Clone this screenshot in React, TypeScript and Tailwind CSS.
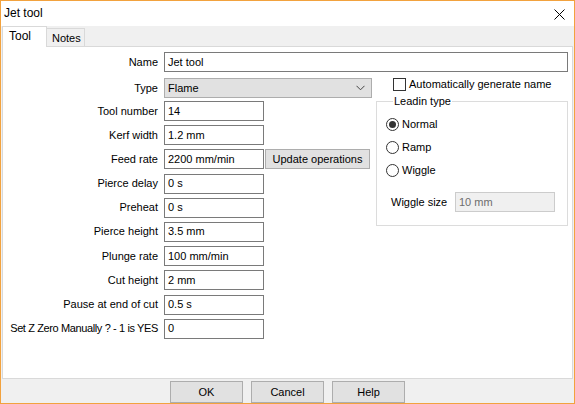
import React from "react";

const fields: [string, string][] = [
  ["Tool number", "14"],
  ["Kerf width", "1.2 mm"],
  ["Feed rate", "2200 mm/min"],
  ["Pierce delay", "0 s"],
  ["Preheat", "0 s"],
  ["Pierce height", "3.5 mm"],
  ["Plunge rate", "100 mm/min"],
  ["Cut height", "2 mm"],
  ["Pause at end of cut", "0.5 s"],
  ["Set Z Zero Manually ? - 1 is YES", "0"],
];

function Label({ children, tight }: { children: React.ReactNode; tight?: boolean }) {
  return (
    <div className="flex w-[150px] shrink-0 justify-end whitespace-nowrap">
      <span className={tight ? "tracking-[-0.38px]" : ""}>{children}</span>
    </div>
  );
}

function TextBox({ value, className = "" }: { value: string; className?: string }) {
  return (
    <div
      className={`flex h-[20px] items-center border border-[#7a7a7a] bg-white pl-[3px] text-black ${className}`}
    >
      {value}
    </div>
  );
}

function Radio({ label, checked }: { label: string; checked?: boolean }) {
  return (
    <div className="flex h-[13px] items-center gap-[3px]">
      <span className="flex h-[13px] w-[13px] items-center justify-center rounded-full border border-[#333] bg-white">
        {checked && <span className="h-[7px] w-[7px] rounded-full bg-[#333]" />}
      </span>
      <span>{label}</span>
    </div>
  );
}

function Button({ children, className = "" }: { children: React.ReactNode; className?: string }) {
  return (
    <div
      className={`flex items-center justify-center border border-[#adadad] bg-[#e1e1e1] text-black ${className}`}
    >
      {children}
    </div>
  );
}

export default function App() {
  return (
    <div className="flex h-[404px] w-[575px] flex-col border border-[#f2a23e] bg-[#f0f0f0] font-['Liberation_Sans',Arial,sans-serif] text-[11px] leading-[13px] text-black">
      {/* title bar */}
      <div className="flex h-[25px] shrink-0 items-center justify-between bg-white pl-[3px] pr-[9px]">
        <span className="text-[12px]">Jet tool</span>
        <svg width="11" height="11" viewBox="0 0 11 11" className="mt-[2px]">
          <path d="M0.5 0.5 L10.5 10.5 M10.5 0.5 L0.5 10.5" stroke="#000" strokeWidth="1" />
        </svg>
      </div>

      {/* tabs */}
      <div className="flex h-[20px] shrink-0 items-end pl-[1px]">
        <div className="relative z-10 -mb-px flex h-[21px] w-[45px] items-start border border-b-0 border-[#d9d9d9] bg-white pl-[6px] pt-[3px] text-[12px]">
          Tool
        </div>
        <div className="-ml-px flex h-[18px] w-[39px] items-start border border-b-0 border-[#d9d9d9] pl-[5px] pt-[3px]">
          Notes
        </div>
      </div>

      {/* tab page */}
      <div className="mx-[1px] flex-1 border border-[#d9d9d9] bg-white pl-[5px] pr-[4px] pt-[5px]">
        <div className="flex items-center gap-[6px]">
          <Label>Name</Label>
          <TextBox value="Jet tool" className="flex-1" />
        </div>

        <div className="mt-[6px] flex items-center">
          <Label>Type</Label>
          <div className="ml-[6px] flex h-[20px] w-[208px] items-center justify-between border border-[#adadad] bg-[#e1e1e1] pl-[3px] pr-[6px]">
            <span>Flame</span>
            <svg width="9" height="6" viewBox="0 0 9 6">
              <path d="M0.5 0.8 L4.5 4.8 L8.5 0.8" fill="none" stroke="#444" strokeWidth="1" />
            </svg>
          </div>
          <div className="ml-[21px] flex items-center gap-[3px] self-start">
            <span className="h-[13px] w-[13px] border border-[#333] bg-white" />
            <span>Automatically generate name</span>
          </div>
        </div>

        <div className="mt-[3px] flex items-start">
          <div className="flex flex-col gap-[4.2px]">
            {fields.map(([label, value], i) => (
              <div key={label} className="flex items-center gap-[6px]">
                <Label tight={i === fields.length - 1}>{label}</Label>
                <TextBox value={value} className="w-[100px]" />
                {label === "Feed rate" && (
                  <Button className="-ml-[5px] h-[20px] w-[105px]">Update operations</Button>
                )}
              </div>
            ))}
          </div>

          <fieldset className="-mt-[6px] ml-[6px] w-[193px] border border-[#dcdcdc] pb-[13px] pl-[9px]">
            <legend className="ml-[7px] px-[1px]">Leadin type</legend>
            <div className="mt-[10px] flex flex-col gap-[10px]">
              <Radio label="Normal" checked />
              <Radio label="Ramp" />
              <Radio label="Wiggle" />
            </div>
            <div className="mt-[15px] flex items-center pl-[5px]">
              <span className="w-[64px]">Wiggle size</span>
              <div className="flex h-[20px] w-[100px] items-center border border-[#cccccc] bg-[#f0f0f0] pl-[3px] text-[#6d6d6d]">
                10 mm
              </div>
            </div>
          </fieldset>
        </div>
      </div>

      {/* dialog buttons */}
      <div className="flex h-[24px] shrink-0 items-end gap-[8px] pl-[169px]">
        <Button className="h-[22px] w-[73px]">OK</Button>
        <Button className="h-[22px] w-[73px]">Cancel</Button>
        <Button className="h-[22px] w-[73px]">Help</Button>
      </div>
    </div>
  );
}
